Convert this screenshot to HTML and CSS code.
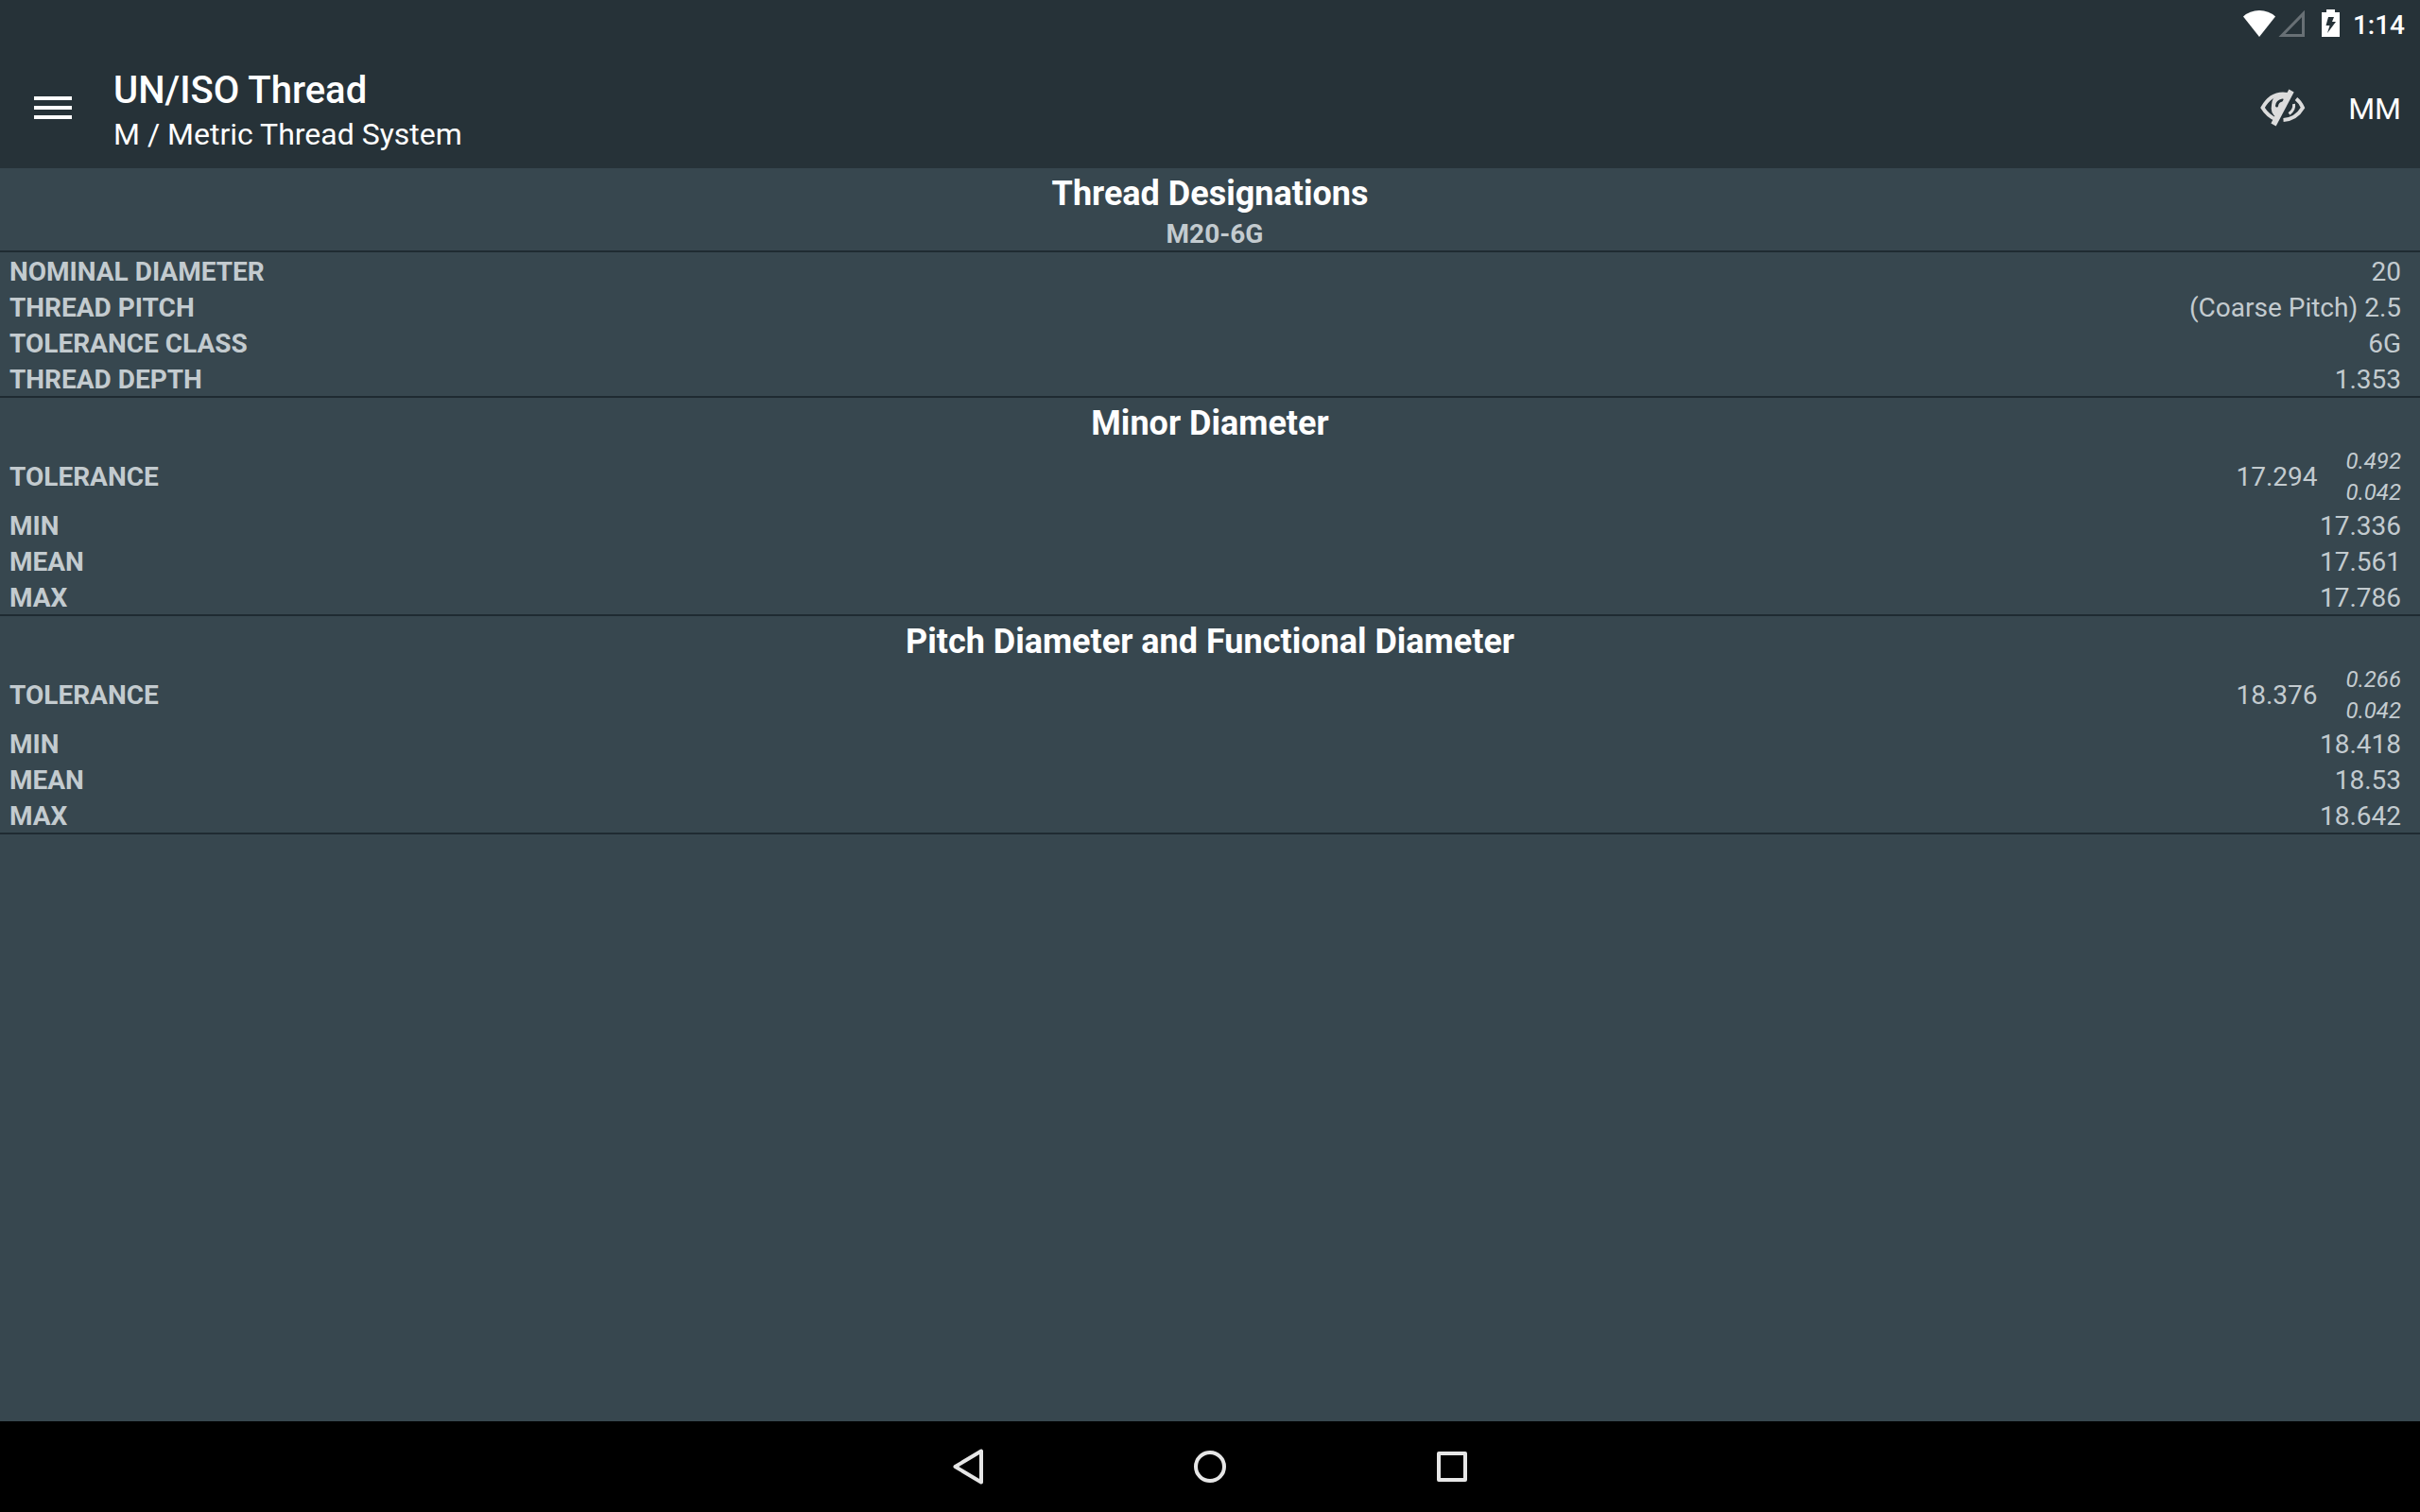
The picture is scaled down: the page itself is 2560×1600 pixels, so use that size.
FILE: index.html
```
<!DOCTYPE html>
<html lang="en">
<head>
  <meta charset="UTF-8" />
  <meta name="viewport" content="width=device-width, initial-scale=1.0"/>
  <title>UN/ISO Thread</title>
  <link rel="stylesheet" href="styles.css">
</head>
<body>
  <header class="app-header">
    <div class="status-bar">
      <svg class="wifi" width="36" height="30" viewBox="0 0 36 30"><path d="M18 29 L1 7.500 Q8 1 18 1 T35 7.500 Z" fill="#fff"/></svg>
      <svg class="signal" width="30" height="30" viewBox="0 0 30 30"><path d="M26.500 4.500 V27.500 H4 Z" fill="none" stroke="#687075" stroke-width="3"/></svg>
      <svg class="battery" width="20" height="30" viewBox="0 0 20 30"><path fill="#fff" fill-rule="evenodd" d="M5 0 H14 V3 H19 V29 H0 V3 H5 Z M7 8 L4.500 17 H8.500 L6 25 L15 13 H11 L13 8 Z"/></svg>
      <time class="clock">1:14</time>
    </div>
    <div class="toolbar">
      <button class="icon-button" aria-label="Menu">
        <svg width="40" height="24" viewBox="0 0 40 24"><path d="M0 2H40M0 12H40M0 22H40" stroke="#fff" stroke-width="4"/></svg>
      </button>
      <div class="titles">
        <h1>UN/ISO Thread</h1>
        <p>M / Metric Thread System</p>
      </div>
      <button class="icon-button" aria-label="Hide empty values">
        <svg width="48" height="40" viewBox="0 0 48 40">
          <path d="M29 6 Q12 3 2.500 20 Q8 29 17 32.500" fill="none" stroke="#dcdcdc" stroke-width="4"/>
          <path d="M38 10.500 Q42.500 14 45 20 Q38 32 24.500 33" fill="none" stroke="#dcdcdc" stroke-width="4"/>
          <path d="M35.500 16 Q36.500 22 30.500 26.500" fill="none" stroke="#dcdcdc" stroke-width="3"/>
          <path d="M14 10 Q20 5 30 7 L18 31 Q10 26 12 17 Q12 13 14 10 Z" fill="#dcdcdc"/>
          <path d="M17.500 18 Q18 13 23.500 12" fill="none" stroke="#263238" stroke-width="3" stroke-linecap="round"/>
          <path d="M33 2 L14 38" fill="none" stroke="#dcdcdc" stroke-width="6"/>
        </svg>
      </button>
      <button class="unit-button">MM</button>
    </div>
  </header>

  <main>
    <section>
      <h2>Thread Designations</h2>
      <p class="designation">M20-6G</p>
    </section>
    <section>
      <dl>
        <div class="row"><dt>NOMINAL DIAMETER</dt><dd>20</dd></div>
        <div class="row"><dt>THREAD PITCH</dt><dd>(Coarse Pitch) 2.5</dd></div>
        <div class="row"><dt>TOLERANCE CLASS</dt><dd>6G</dd></div>
        <div class="row"><dt>THREAD DEPTH</dt><dd>1.353</dd></div>
      </dl>
    </section>
    <section>
      <h2>Minor Diameter</h2>
      <dl>
        <div class="row">
          <dt>TOLERANCE</dt>
          <dd>17.294</dd>
          <dd class="limits"><span>0.492</span><span>0.042</span></dd>
        </div>
        <div class="row"><dt>MIN</dt><dd>17.336</dd></div>
        <div class="row"><dt>MEAN</dt><dd>17.561</dd></div>
        <div class="row"><dt>MAX</dt><dd>17.786</dd></div>
      </dl>
    </section>
    <section>
      <h2>Pitch Diameter and Functional Diameter</h2>
      <dl>
        <div class="row">
          <dt>TOLERANCE</dt>
          <dd>18.376</dd>
          <dd class="limits"><span>0.266</span><span>0.042</span></dd>
        </div>
        <div class="row"><dt>MIN</dt><dd>18.418</dd></div>
        <div class="row"><dt>MEAN</dt><dd>18.53</dd></div>
        <div class="row"><dt>MAX</dt><dd>18.642</dd></div>
      </dl>
    </section>
  </main>

  <nav class="nav-bar">
    <button aria-label="Back"><svg width="40" height="40" viewBox="0 0 40 40"><path d="M34 3.500 V36.500 L6.500 20 Z"/></svg></button>
    <button aria-label="Home"><svg width="40" height="40" viewBox="0 0 40 40"><circle cx="20" cy="20" r="15"/></svg></button>
    <button aria-label="Recent apps"><svg width="40" height="40" viewBox="0 0 40 40"><rect x="6" y="6" width="28" height="28"/></svg></button>
  </nav>
</body>
</html>
```
FILE: styles.css
```
* {
  box-sizing: border-box;
}
body {
  margin: 0;
  min-height: 100vh;
  display: flex;
  flex-direction: column;
  background: #37474f;
  color: #fff;
  font-family: Roboto, sans-serif;
}
h1, h2, p, dl, dd {
  margin: 0;
}
svg {
  display: block;
}
button {
  padding: 0;
  border: none;
  background: none;
  color: inherit;
  font: inherit;
  cursor: pointer;
}
/* Status bar and toolbar */
.app-header {
  background: #263238;
}
.status-bar {
  height: 50px;
  display: flex;
  justify-content: flex-end;
  align-items: center;
  padding-right: 16px;
}
.signal {
  margin: 0 16px 0 2px;
}
.clock {
  margin-left: 13px;
  padding-top: 3px;
  font-size: 28px;
  font-weight: 500;
  line-height: 36px;
}
.toolbar {
  height: 128px;
  display: flex;
  align-items: center;
  padding: 0 20px 0 36px;
}
.titles {
  flex: 1;
  padding: 7px 0 0 44px;
}
.titles h1 {
  font-size: 40px;
  font-weight: 500;
  line-height: 48px;
}
.titles p {
  font-size: 32px;
  line-height: 44px;
}
.unit-button {
  margin-left: 45px;
  padding-top: 2px;
  font-size: 32px;
}
/* Thread data */
main {
  flex: 1;
  color: #c3cbcf;
  font-size: 28px;
  line-height: 34px;
}
section {
  border-bottom: 2px solid #1f2b32;
}
h2 {
  padding-top: 6px;
  color: #fff;
  font-size: 36px;
  font-weight: 700;
  line-height: 43px;
  text-align: center;
}
.designation {
  padding: 4px 0 0 10px;
  font-weight: 700;
  text-align: center;
}
.row {
  display: flex;
  align-items: center;
  padding: 0 20px 0 10px;
}
dt, dd {
  padding-top: 4px;
}
dt {
  flex: 1;
  font-weight: 700;
}
.limits {
  display: flex;
  flex-direction: column;
  margin-left: 30px;
  padding: 0;
  font-size: 24px;
  font-style: italic;
  line-height: 29px;
}
.limits span {
  padding-top: 4px;
}
/* System navigation */
.nav-bar {
  height: 96px;
  display: flex;
  justify-content: center;
  background: #000;
}
.nav-bar button {
  width: 256px;
  display: flex;
  justify-content: center;
  align-items: center;
}
.nav-bar svg {
  fill: none;
  stroke: #e6e6e6;
  stroke-width: 4;
  stroke-linejoin: round;
}
```
